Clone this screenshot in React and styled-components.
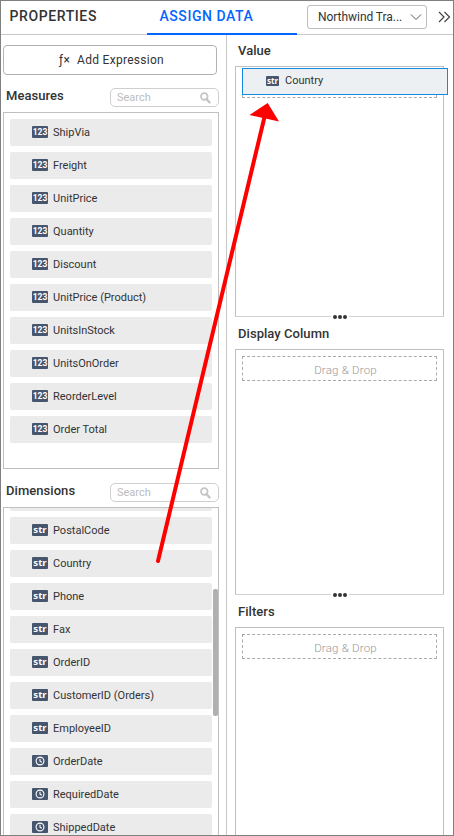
import React from "react";
import styled, { createGlobalStyle } from "styled-components";

const Global = createGlobalStyle`
  *, *::before, *::after { box-sizing: border-box; }
  body { margin: 0; background: #fff; }
`;

const Frame = styled.div`
  position: relative;
  width: 454px;
  height: 836px;
  overflow: hidden;
  border: 1px solid #808080;
  display: flex;
  flex-direction: column;
  font-family: Roboto, "Liberation Sans", sans-serif;
  font-size: 11px;
  color: #333;
  background: #fff;
`;

const Header = styled.header`
  height: 34px;
  flex: none;
  display: flex;
  box-shadow: inset 0 -1px #c8c8c8;
`;

const Tab = styled.div`
  width: ${(p) => p.$width}px;
  padding-left: ${(p) => p.$inset}px;
  line-height: 31px;
  height: 34px;
  font-size: 14px;
  font-weight: 500;
  letter-spacing: ${(p) => p.$spacing}px;
  white-space: nowrap;
  color: ${(p) => (p.$active ? "#0565ff" : "#333")};
  border-bottom: 2px solid ${(p) => (p.$active ? "#0565ff" : "transparent")};
`;

const SourceSelect = styled.div`
  margin: 4px 0 0 10px;
  width: 120px;
  height: 24px;
  padding: 0 4px 0 10px;
  border: 1px solid #bdbdbd;
  border-radius: 3px;
  display: flex;
  align-items: center;
  justify-content: space-between;
  font-size: 12px;
  letter-spacing: -0.05px;
  white-space: nowrap;
`;

const Collapse = styled.div`
  margin: 10px 0 0 11px;
  height: 12px;
  line-height: 0;
`;

const Body = styled.main`
  flex: 1;
  min-height: 0;
  display: flex;
`;

const Fields = styled.section`
  width: 226px;
  flex: none;
  padding: 10px 7px 0 2px;
  border-right: 1px solid #c8c8c8;
`;

const AddButton = styled.button`
  display: flex;
  align-items: center;
  justify-content: center;
  gap: 7px;
  width: 214px;
  height: 30px;
  padding: 0 0 0 3px;
  border: 1px solid #b3b3b3;
  border-radius: 4px;
  background: #fff;
  color: #333;
  font: 12px Roboto, sans-serif;
  letter-spacing: 0.28px;
`;

const GroupHead = styled.div`
  display: flex;
  justify-content: space-between;
  height: 20px;
  margin-top: ${(p) => p.$top}px;
  margin-bottom: ${(p) => p.$bottom}px;
  padding-left: 3px;
`;

const Title = styled.h2`
  margin: 0;
  font-size: 13px;
  font-weight: 500;
  line-height: 16px;
  letter-spacing: 0.05px;
`;

const SearchBox = styled.div`
  width: 109px;
  height: 19px;
  padding: 0 7px 0 6px;
  border: 1px solid #cfcfcf;
  border-radius: 5px;
  display: flex;
  align-items: center;
  justify-content: space-between;
  color: #bdbdbd;
`;

const List = styled.div`
  position: relative;
  width: 216px;
  height: ${(p) => p.$height}px;
  padding: ${(p) => (p.$scrolled ? 0 : 6)}px 6px 0;
  overflow: hidden;
  border: 1px solid #c0c0c0;
  display: flex;
  flex-direction: column;
  gap: 6px;
`;

const Row = styled.div`
  flex: none;
  height: 27px;
  padding-left: 22px;
  border-radius: 2px;
  background: #ebebeb;
  display: flex;
  align-items: center;
  gap: 5px;
  line-height: 13px;
`;

const RowRemnant = styled.div`
  flex: none;
  height: 3px;
  border-radius: 0 0 2px 2px;
  background: #ebebeb;
`;

const Thumb = styled.div`
  position: absolute;
  top: 81px;
  right: 0;
  width: 5px;
  height: 127px;
  border-radius: 2px;
  background: #b0b0b0;
`;

const Badge = styled.span`
  width: ${(p) => (p.$small ? 13 : 16)}px;
  height: ${(p) => (p.$small ? 10 : 12)}px;
  margin-bottom: ${(p) => (p.$small ? 0 : 1)}px;
  flex: none;
  display: flex;
  align-items: center;
  justify-content: center;
  border-radius: 1px;
  background: #46566e;
  color: #fff;
  font: bold ${(p) => p.$size}px/10px ${(p) => (p.$numeric ? "Roboto" : '"Noto Sans"')}, sans-serif;
  letter-spacing: 0;
`;

const Targets = styled.section`
  flex: 1;
  padding: 8px 9px 0 8px;
  display: flex;
  flex-direction: column;
`;

const TargetTitle = styled(Title)`
  flex: none;
  padding-left: 3px;
  height: ${(p) => p.$height}px;
  line-height: ${(p) => p.$line}px;
`;

const DropBox = styled.div`
  position: relative;
  flex: none;
  width: 209px;
  height: ${(p) => p.$height}px;
  padding: 6px;
  border: 1px solid #c0c0c0;
  border-bottom-color: #d2d2d2;
`;

const DropHint = styled.div`
  height: 25px;
  border: 1px dashed #aaa;
  text-align: center;
  line-height: 27px;
  padding-left: 12px;
  color: #999;
  font-size: 11.5px;
  font-weight: 300;
  letter-spacing: 0.2px;
`;

const Dragged = styled.div`
  position: absolute;
  left: 6px;
  top: 1px;
  width: 206px;
  height: 27px;
  padding: 0 0 2px 23px;
  display: flex;
  align-items: center;
  gap: 6px;
  border: 1px solid #1389df;
  background: #ecf0f3;
`;

const Grip = styled.div`
  position: absolute;
  left: 95px;
  bottom: -3px;
  width: 18px;
  height: 5px;
  display: flex;
  justify-content: center;
  align-items: center;
  gap: 1px;
  background: #fff;
`;

const Dot = styled.i`
  width: 4px;
  height: 4px;
  border-radius: 50%;
  background: #333;
`;

const Arrow = styled.svg`
  position: absolute;
  left: -1px;
  top: -1px;
  pointer-events: none;
`;

const measures = [
  "ShipVia", "Freight", "UnitPrice", "Quantity", "Discount",
  "UnitPrice (Product)", "UnitsInStock", "UnitsOnOrder", "ReorderLevel", "Order Total",
];

const dimensions = [
  ["PostalCode", "str"], ["Country", "str"], ["Phone", "str"], ["Fax", "str"],
  ["OrderID", "str"], ["CustomerID (Orders)", "str"], ["EmployeeID", "str"],
  ["OrderDate", "date"], ["RequiredDate", "date"], ["ShippedDate", "date"],
];

function Clock() {
  return (
    <svg width="10" height="10" viewBox="0 0 10 10" fill="none" stroke="#fff" strokeWidth="1.1">
      <circle cx="5" cy="5" r="3.9" />
      <path d="M5 2.7V5.2L6.8 6.2" />
    </svg>
  );
}

function TypeBadge({ type, small }) {
  if (type === "date") return <Badge><Clock /></Badge>;
  const numeric = type === "num";
  return (
    <Badge $small={small} $numeric={numeric} $size={numeric ? 8.5 : small ? 8 : 9.6}>
      {numeric ? "123" : "str"}
    </Badge>
  );
}

function Search() {
  return (
    <SearchBox>
      <span>Search</span>
      <svg width="11" height="12" viewBox="0 0 11 12" fill="none" stroke="#c4c4c4">
        <circle cx="4.3" cy="4.5" r="3.3" strokeWidth="1.7" />
        <path d="M6.5 7L9.6 10.5" strokeWidth="2.3" strokeLinecap="round" />
      </svg>
    </SearchBox>
  );
}

function Dots() {
  return <Grip><Dot /><Dot /><Dot /></Grip>;
}

export default function App() {
  return (
    <Frame>
      <Global />
      <Header>
        <Tab $width={146} $inset={8.5} $spacing={0.6}>PROPERTIES</Tab>
        <Tab $width={150} $inset={12.5} $spacing={0.55} $active>ASSIGN DATA</Tab>
        <SourceSelect>
          <span>Northwind Tra...</span>
          <svg width="12" height="8" viewBox="0 0 12 8" fill="none" stroke="#555">
            <path d="M1 1.5L6 6.5L11 1.5" />
          </svg>
        </SourceSelect>
        <Collapse>
          <svg width="13" height="12" viewBox="0 0 13 12" fill="none" stroke="#444" strokeWidth="1.2">
            <path d="M1 1L6 6L1 11M6.5 1L11.5 6L6.5 11" />
          </svg>
        </Collapse>
      </Header>
      <Body>
        <Fields>
          <AddButton><span>ƒ×</span><span>Add Expression</span></AddButton>
          <GroupHead $top={13} $bottom={4}><Title>Measures</Title><Search /></GroupHead>
          <List $height={357}>
            {measures.map((name) => (
              <Row key={name}><TypeBadge type="num" />{name}</Row>
            ))}
          </List>
          <GroupHead $top={14} $bottom={4}><Title>Dimensions</Title><Search /></GroupHead>
          <List $height={340} $scrolled>
            <RowRemnant />
            {dimensions.map(([name, type]) => (
              <Row key={name}><TypeBadge type={type} />{name}</Row>
            ))}
            <Thumb />
          </List>
        </Fields>
        <Targets>
          <TargetTitle $height={23} $line={15}>Value</TargetTitle>
          <DropBox $height={251}>
            <DropHint />
            <Dragged><TypeBadge type="str" small />Country</Dragged>
            <Dots />
          </DropBox>
          <TargetTitle $height={32} $line={34}>Display Column</TargetTitle>
          <DropBox $height={246}>
            <DropHint>Drag &amp; Drop</DropHint>
            <Dots />
          </DropBox>
          <TargetTitle $height={32} $line={34}>Filters</TargetTitle>
          <DropBox $height={220}>
            <DropHint>Drag &amp; Drop</DropHint>
          </DropBox>
        </Targets>
      </Body>
      <Arrow width="454" height="836" viewBox="0 0 454 836">
        <path d="M158 561L264.5 117" stroke="#f00" strokeWidth="4" strokeLinecap="round" />
        <path d="M267.7 103L249.5 115L279 121.5Z" fill="#f00" />
      </Arrow>
    </Frame>
  );
}
